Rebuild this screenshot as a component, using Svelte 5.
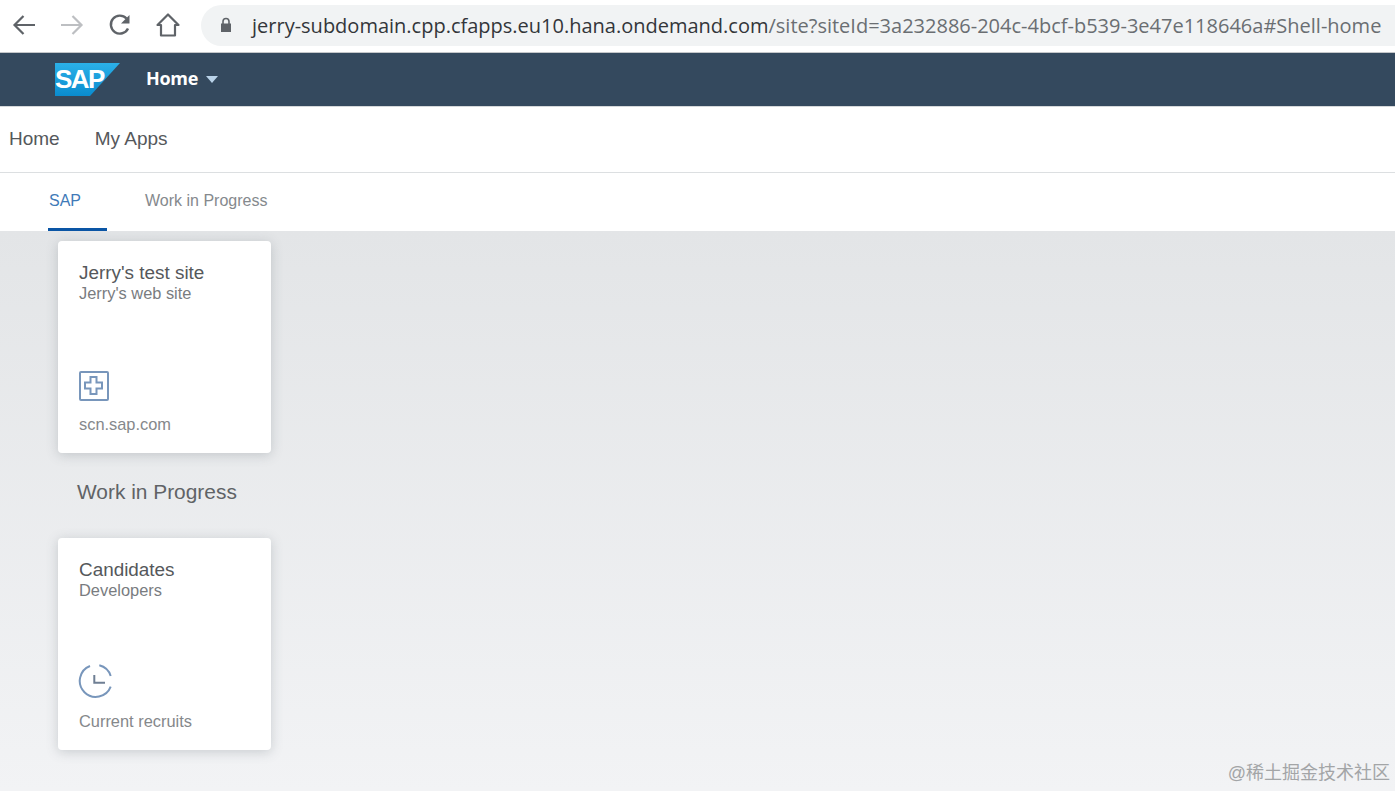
<script lang="ts">
  const tabs = ['SAP', 'Work in Progress'];
  const nav = ['Home', 'My Apps'];
  const url = 'jerry-subdomain.cpp.cfapps.eu10.hana.ondemand.com';
  const urlRest = '/site?siteId=3a232886-204c-4bcf-b539-3e47e118646a#Shell-home';
</script>

<div class="page">
  <header class="browser">
    <svg class="tool" width="24" height="24" viewBox="0 0 24 24" fill="none" stroke="#5f6368" stroke-width="2.2">
      <path d="M23 12H2M11.5 3 2.500 12l9 9" />
    </svg>
    <svg class="tool fwd" width="24" height="24" viewBox="0 0 24 24" fill="none" stroke="#bdbfc2" stroke-width="2.2">
      <path d="M1 12h21M12.500 3l9 9-9 9" />
    </svg>
    <svg class="tool reload" width="24" height="24" viewBox="0 0 24 24" fill="none" stroke="#5f6368" stroke-width="2.400">
      <path d="M20 15.500A9 9 0 1 1 18.500 5.500" />
      <path d="M21.500 2v8.500H13z" fill="#5f6368" stroke="none" />
    </svg>
    <svg class="tool home" width="26" height="26" viewBox="0 0 26 26" fill="none" stroke="#5f6368" stroke-width="2.200">
      <path d="M13 2.500 2.500 13H6v10.500h14V13h3.500z" stroke-linejoin="round" />
    </svg>
    <div class="omnibox">
      <svg width="12" height="16" viewBox="0 0 12 16" fill="#5f6368">
        <path d="M1 6.500h10V15H1z" />
        <path d="M3 7V4.500a3 3 0 0 1 6 0V7" fill="none" stroke="#5f6368" stroke-width="1.600" />
      </svg>
      <span class="url"><span class="host">{url}</span>{urlRest}</span>
    </div>
  </header>

  <div class="shellbar">
    <div class="logo">
      <svg width="65" height="33" viewBox="0 0 65 33">
        <defs>
          <linearGradient id="sapblue" x1="0" y1="0" x2="0" y2="1">
            <stop offset="0" stop-color="#2bb0e8" />
            <stop offset="1" stop-color="#0a8ccf" />
          </linearGradient>
        </defs>
        <polygon points="0,0 65,0 35,33 0,33" fill="url(#sapblue)" />
      </svg>
      <span class="logotext">SAP</span>
    </div>
    <span class="shelltitle">Home</span>
    <svg class="caret" width="12" height="7" viewBox="0 0 12 7"><polygon points="0,0 12,0 6,7" fill="#b9d2e8" /></svg>
  </div>

  <nav class="topnav">
    {#each nav as item}
      <span>{item}</span>
    {/each}
  </nav>

  <div class="tabs">
    {#each tabs as tab, i}
      <span class="tab" class:active={i === 0}>{tab}</span>
    {/each}
  </div>

  <main class="content">
    <section class="card">
      <h3>Jerry's test site</h3>
      <p class="sub">Jerry's web site</p>
      <svg class="icon" width="30" height="30" viewBox="0 0 30 30" fill="none" stroke="#7896bb" stroke-width="2">
        <rect x="1" y="1" width="28" height="28" rx="1" />
        <path d="M11.500 6h6v5.500H23v6h-5.500V23h-6v-5.500H6v-6h5.500z" />
      </svg>
      <p class="foot">scn.sap.com</p>
    </section>

    <h2>Work in Progress</h2>

    <section class="card">
      <h3>Candidates</h3>
      <p class="sub">Developers</p>
      <svg class="icon clock" width="36" height="36" viewBox="0 0 36 36" fill="none" stroke="#7896bb" stroke-width="2">
        <path d="M13 3A16 16 0 1 0 33.700 23.700" />
        <path d="M22.300 2.300A16 16 0 0 1 33.700 13" />
        <path d="M17.300 12v7.700H28" stroke="#6f7f94" />
      </svg>
      <p class="foot">Current recruits</p>
    </section>
  </main>

  <div class="watermark">@稀土掘金技术社区</div>
</div>

<style>
  :global(body) {
    margin: 0;
    background: #fff;
  }

  .page {
    position: relative;
    display: flex;
    flex-direction: column;
    height: 791px;
    overflow: hidden;
    font-family: "Liberation Sans", sans-serif;
  }

  .browser {
    display: flex;
    align-items: center;
    height: 53px;
    flex: none;
    padding: 0 0 2px 12px;
    box-sizing: border-box;
    border-bottom: 1px solid #c4c7ca;
    background: #fff;
    font-family: "Open Sans", sans-serif;
  }

  .tool {
    flex: none;
  }

  .fwd,
  .reload {
    margin-left: 24px;
  }

  .home {
    margin-left: 23px;
  }

  .omnibox {
    display: flex;
    align-items: center;
    gap: 20px;
    flex: 1;
    height: 41px;
    margin-left: 20px;
    padding-left: 19px;
    border-radius: 21px 0 0 21px;
    background: #f1f3f4;
  }

  .url {
    color: #6a6e72;
    font-size: 20px;
    white-space: nowrap;
  }

  .host {
    color: #33363a;
  }

  .shellbar {
    display: flex;
    align-items: center;
    flex: none;
    height: 54px;
    padding-left: 55px;
    padding-bottom: 2px;
    background: #34495e;
    border-bottom: 1px solid #d5d8da;
    box-sizing: border-box;
    font-family: "Open Sans", sans-serif;
  }

  .logo {
    position: relative;
    width: 66px;
    height: 33px;
    margin-top: 2px;
  }

  .logo svg {
    display: block;
  }

  .logotext {
    position: absolute;
    left: 0;
    top: 3px;
    color: #fff;
    font-family: "Liberation Sans", sans-serif;
    font-size: 26px;
    font-weight: 700;
    line-height: 27px;
    letter-spacing: -1.500px;
  }

  .shelltitle {
    margin-left: 25px;
    margin-bottom: 2px;
    color: #fff;
    font-size: 18px;
    font-weight: 700;
    letter-spacing: -0.3px;
  }

  .caret {
    margin-left: 8px;
    margin-top: 2px;
  }

  .topnav {
    display: flex;
    align-items: center;
    gap: 35px;
    flex: none;
    height: 66px;
    padding-left: 9px;
    padding-bottom: 1px;
    border-bottom: 1px solid #dcdfe1;
    box-sizing: border-box;
    color: #55585b;
    font-size: 19px;
  }

  .tabs {
    display: flex;
    flex: none;
    height: 58px;
    padding-left: 48px;
    background: #fff;
  }

  .tab {
    display: flex;
    align-items: center;
    box-sizing: border-box;
    height: 58px;
    padding-bottom: 3px;
    margin-right: 38px;
    color: #85898d;
    font-size: 16px;
  }

  .tab.active {
    width: 59px;
    padding-bottom: 0;
    padding-left: 1px;
    border-bottom: 3px solid #0a55a5;
    color: #3f7ab8;
  }

  .content {
    flex: 1;
    padding: 10px 0 0 58px;
    background: linear-gradient(180deg, #e3e5e7 0%, #f2f3f5 100%);
  }

  .card {
    display: flex;
    flex-direction: column;
    box-sizing: border-box;
    width: 213px;
    height: 212px;
    padding: 21px 21px 0;
    border-radius: 4px;
    background: #fff;
    box-shadow: 0 2px 12px rgba(80, 90, 100, 0.25);
  }

  h3 {
    margin: 0;
    color: #55585b;
    font-size: 18.900px;
    font-weight: 400;
    line-height: 22px;
  }

  .sub {
    margin: 0;
    color: #797c7f;
    font-size: 16.400px;
    line-height: 19px;
  }

  .icon {
    margin-top: 68px;
  }

  .icon.clock {
    margin-top: 63px;
    margin-left: -2px;
  }

  .foot {
    margin: auto 0 19px;
    color: #85888b;
    font-size: 16.400px;
    line-height: 20px;
  }

  h2 {
    margin: 25px 0 33px 19px;
    color: #606366;
    font-size: 20.900px;
    font-weight: 400;
    line-height: 27px;
  }

  .watermark {
    position: absolute;
    right: 5px;
    bottom: 6px;
    color: #a3a5a7;
    font-family: "Liberation Sans", "Noto Sans CJK SC", sans-serif;
    font-size: 18px;
    line-height: 24px;
  }
</style>
